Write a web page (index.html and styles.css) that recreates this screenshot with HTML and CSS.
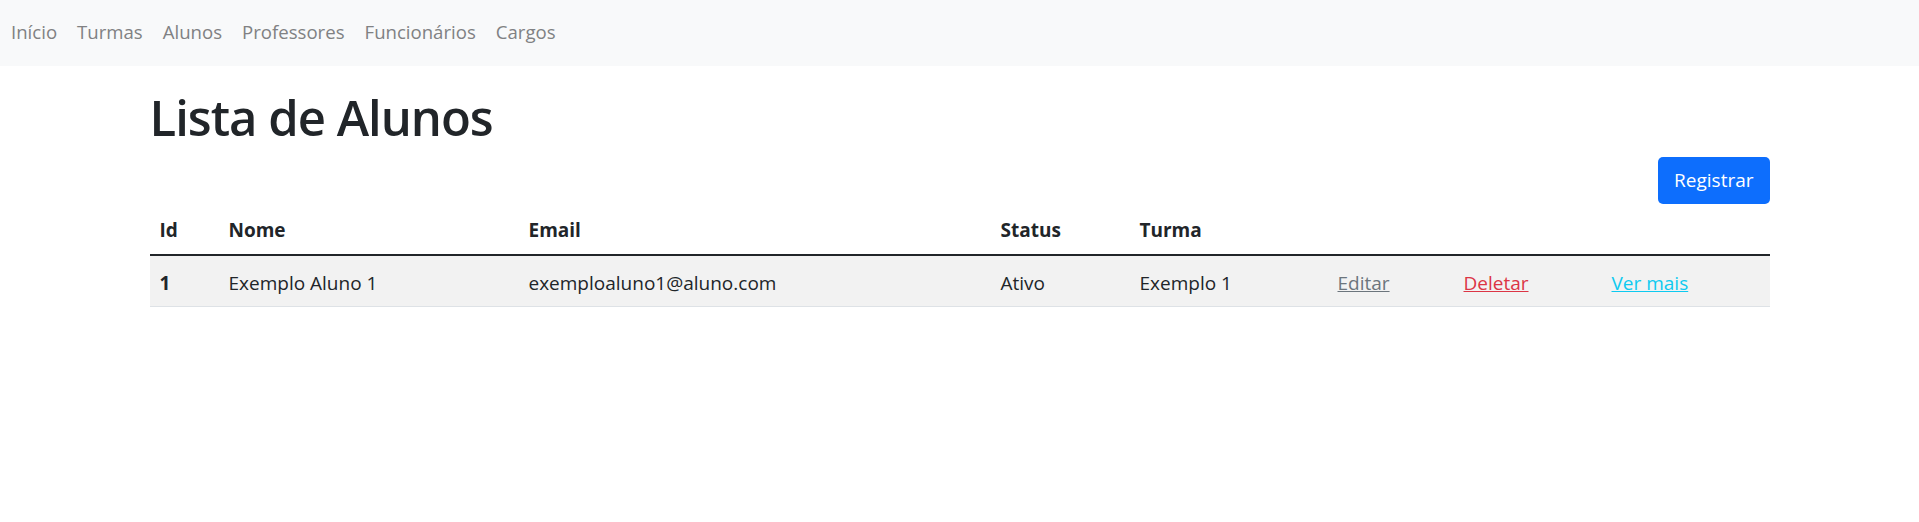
FILE: index.html
```html
<!DOCTYPE html>
<html lang="pt-BR">
<head>
<meta charset="utf-8">
<title>Lista de Alunos</title>
<link rel="stylesheet" href="styles.css">
</head>
<body>
<nav class="navbar">
  <a class="nav-link" href="#">Início</a>
  <a class="nav-link" href="#">Turmas</a>
  <a class="nav-link" href="#">Alunos</a>
  <a class="nav-link" href="#">Professores</a>
  <a class="nav-link" href="#">Funcionários</a>
  <a class="nav-link" href="#">Cargos</a>
</nav>
<main class="container">
  <h1 class="title">Lista de Alunos</h1>
  <div class="actions">
    <a class="btn-primary" href="#">Registrar</a>
  </div>
  <table class="table">
    <colgroup>
      <col class="c-id"><col class="c-nome"><col class="c-email"><col class="c-status"><col class="c-turma"><col class="c-a1"><col class="c-a2"><col class="c-a3">
    </colgroup>
    <thead>
      <tr>
        <th>Id</th><th>Nome</th><th>Email</th><th>Status</th><th>Turma</th><th></th><th></th><th></th>
      </tr>
    </thead>
    <tbody>
      <tr class="striped">
        <th>1</th>
        <td>Exemplo Aluno 1</td>
        <td>exemploaluno1@aluno.com</td>
        <td>Ativo</td>
        <td>Exemplo 1</td>
        <td><a class="link-secondary" href="#">Editar</a></td>
        <td><a class="link-danger" href="#">Deletar</a></td>
        <td><a class="link-info" href="#">Ver mais</a></td>
      </tr>
    </tbody>
  </table>
</main>
</body>
</html>
```
FILE: styles.css
```css
* { box-sizing: border-box; }
html, body { margin: 0; padding: 0; }
body {
  font-family: "Open Sans", "Noto Sans", "Liberation Sans", sans-serif;
  font-size: 20px;
  line-height: 1.5;
  color: #212529;
  background: #fff;
}
.navbar {
  display: flex;
  align-items: center;
  height: 66px;
  background: #f8f9fa;
  padding: 0 0 2px 1px;
}
.nav-link {
  color: #808183;
  text-decoration: none;
  padding: 0 10px;
  font-size: 18.6px;
  line-height: 30px;
}
.container {
  max-width: 1620px;
  margin: 0 auto;
}
.title {
  margin: 21px 0 10px;
  font-size: 49px;
  font-weight: 600;
  line-height: 60px;
  letter-spacing: -1px;
}
.actions {
  display: flex;
  justify-content: flex-end;
}
.btn-primary {
  display: inline-block;
  background: #0d6efd;
  color: #fff;
  text-decoration: none;
  border-radius: 5px;
  padding: 0 16px;
  height: 47px;
  line-height: 47px;
  font-size: 19px;
}
.table {
  width: 100%;
  table-layout: fixed;
  border-collapse: collapse;
  font-size: 19px;
}
.c-id { width: 69px; }
.c-nome { width: 300px; }
.c-email { width: 472px; }
.c-status { width: 139px; }
.c-turma { width: 198px; }
.c-a1 { width: 126px; }
.c-a2 { width: 148px; }
.c-a3 { width: 168px; }
.table th, .table td {
  padding: 10px 10px;
  line-height: 30px;
  text-align: left;
  vertical-align: bottom;
  white-space: nowrap;
}
.table tbody th, .table tbody td { padding: 12px 10px 8px; }
.table thead th { font-weight: 700; padding: 11px 10px 9px; }
.table tbody { border-top: 2.5px solid #212529; }
.table tbody tr { border-bottom: 1.25px solid #dee2e6; }
.table tbody th { font-weight: 700; }
.striped { background: #f2f2f2; }
.link-secondary { color: #6c757d; }
.link-danger { color: #dc3545; }
.link-info { color: #0dcaf0; }
```
